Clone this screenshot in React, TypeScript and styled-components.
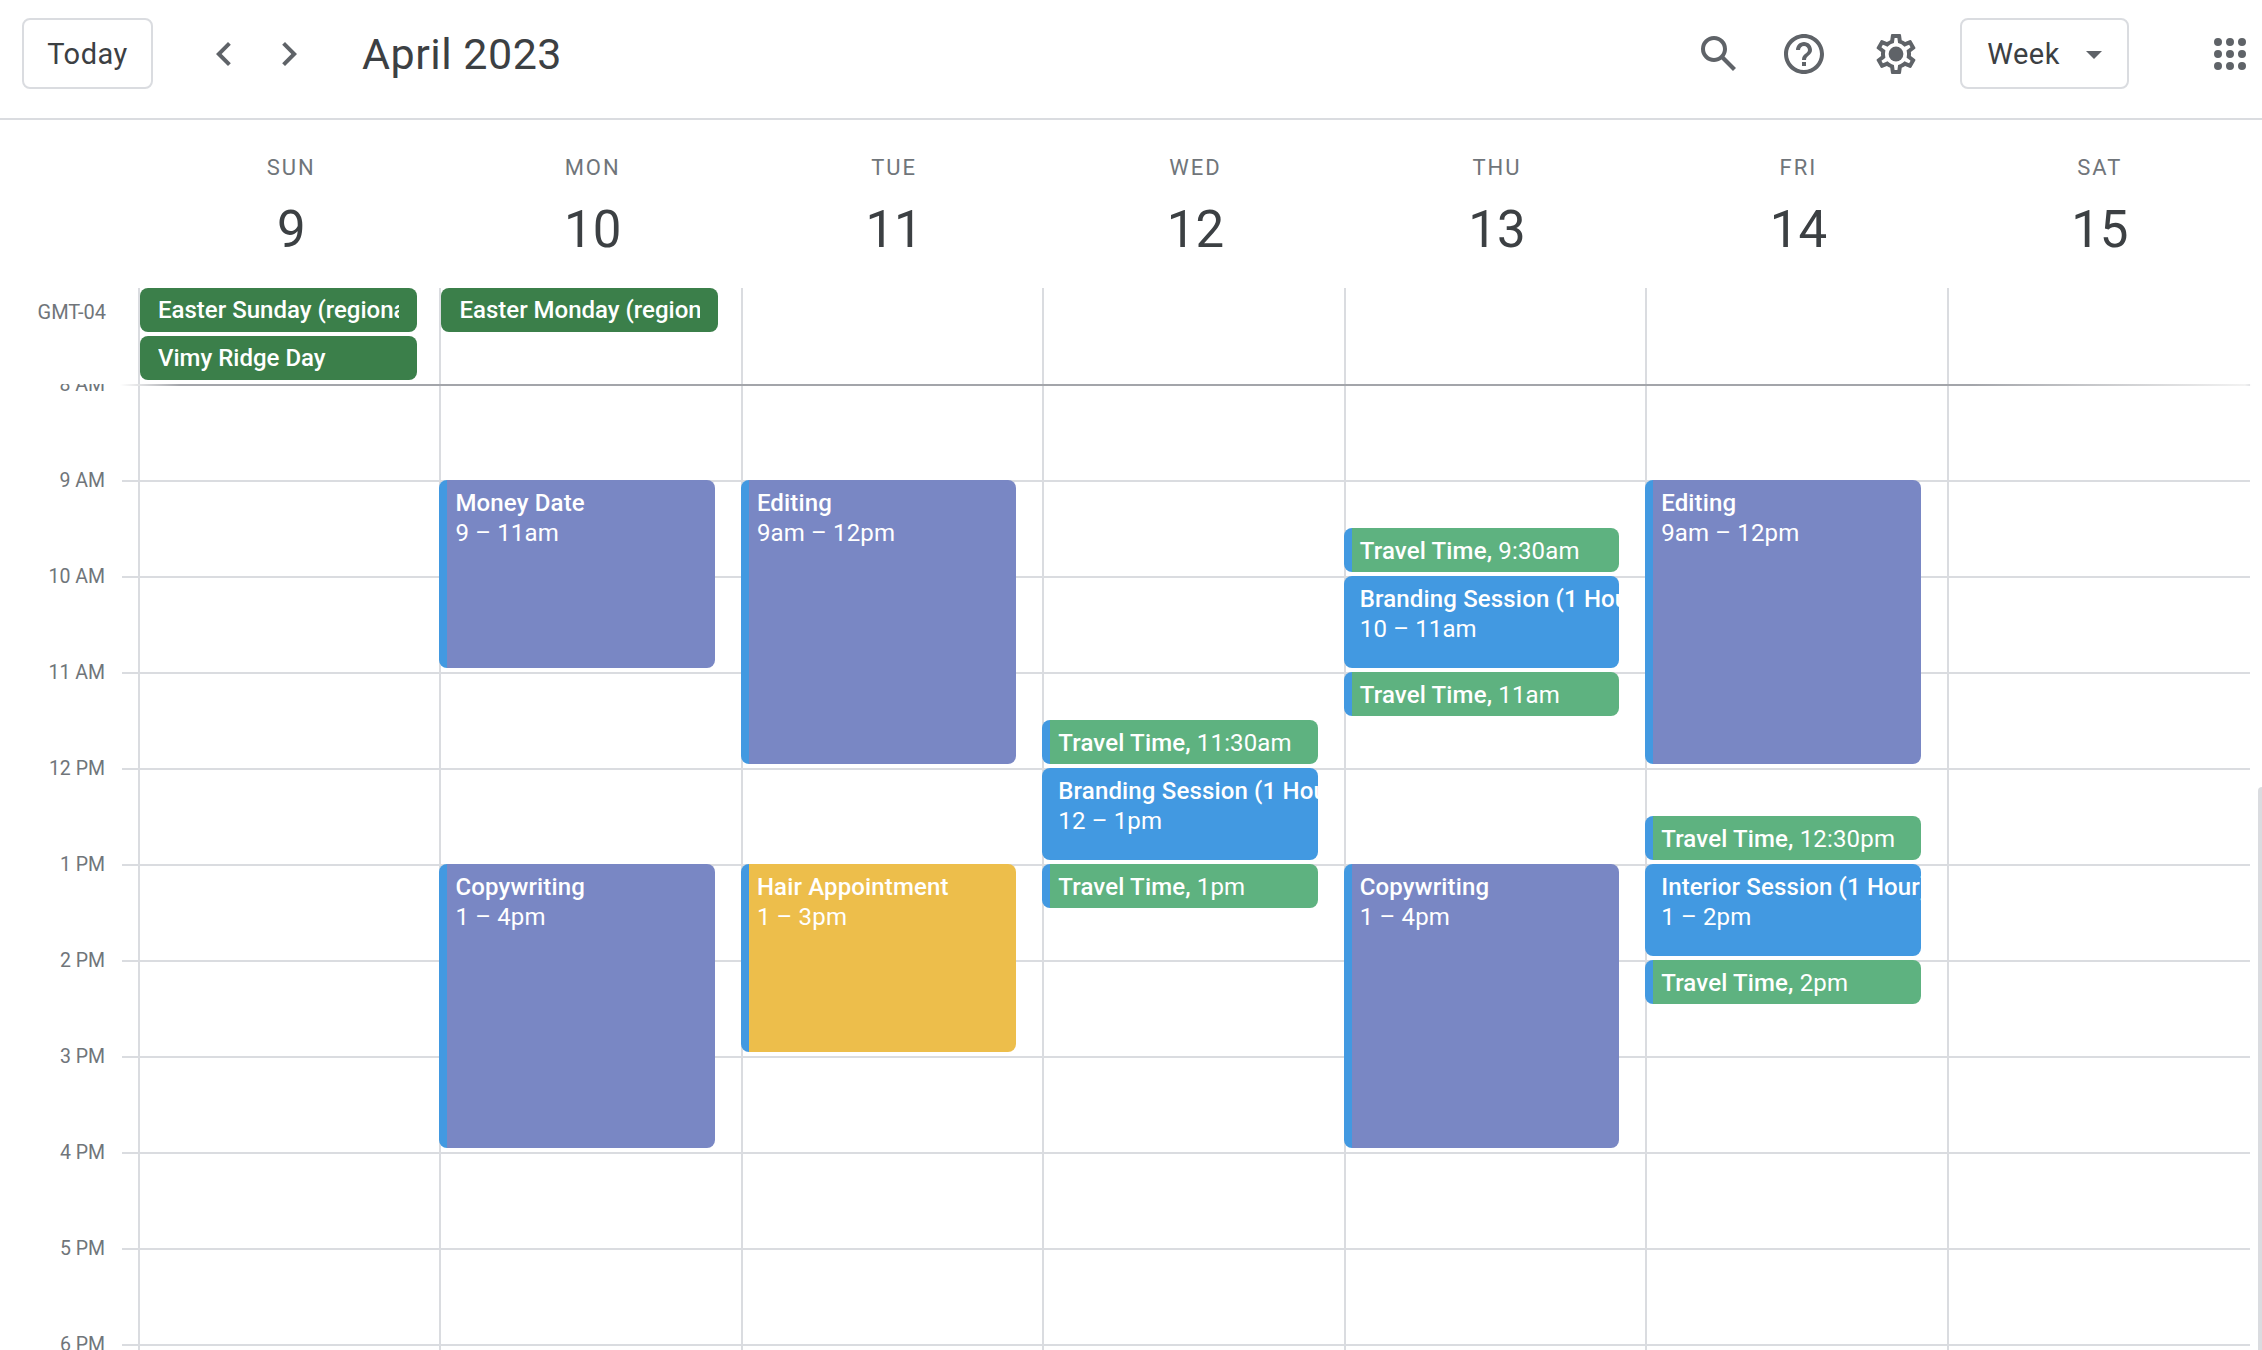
import React from "react";
import styled, { createGlobalStyle } from "styled-components";

const GlobalStyle = createGlobalStyle`
  html, body {
    margin: 0;
    padding: 0;
    background: #fff;
    font-family: Roboto, "Liberation Sans", sans-serif;
  }
`;

const Page = styled.div`
  width: 2262px;
  height: 1350px;
  position: relative;
  overflow: hidden;
  display: flex;
  flex-direction: column;
  background: #fff;
`;

const Toolbar = styled.header`
  height: 118px;
  flex-shrink: 0;
  display: flex;
  align-items: center;
  padding: 0 8px 0 22px;
  border-bottom: 2px solid #dadce0;
`;

const OutlineButton = styled.button<{ $width: number; $gap?: number }>`
  width: ${(p) => p.$width}px;
  height: 71px;
  box-sizing: border-box;
  display: flex;
  align-items: center;
  justify-content: center;
  gap: 26px;
  margin: -11px 0 0 ${(p) => p.$gap ?? 0}px;
  background: #fff;
  border: 2px solid #dadce0;
  border-radius: 8px;
  color: #3c4043;
  font-family: Roboto, sans-serif;
  font-weight: 400;
  font-size: 29px;
  letter-spacing: 0.5px;
`;

const IconSlot = styled.span<{ $gap: number }>`
  width: 48px;
  height: 48px;
  flex-shrink: 0;
  margin-left: ${(p) => p.$gap}px;
  margin-top: -11px;
  color: #5f6368;
  svg {
    display: block;
  }
`;

const MonthTitle = styled.h1`
  margin: -11px 0 0 49px;
  font-weight: 400;
  font-size: 43px;
  letter-spacing: 0.5px;
  color: #3c4043;
`;

const Spacer = styled.div`
  flex: 1;
`;

const Caret = styled.span`
  width: 0;
  height: 0;
  margin-top: 2px;
  border-left: 8px solid transparent;
  border-right: 8px solid transparent;
  border-top: 8px solid #5f6368;
`;

const DayHeaderRow = styled.div`
  height: 168px;
  flex-shrink: 0;
  display: grid;
  grid-template-columns: 138px repeat(7, 301.45px);
`;

const DayHeading = styled.div`
  display: flex;
  flex-direction: column;
  align-items: center;
  padding-left: 5px;
`;

const WeekdayName = styled.div`
  margin-top: 35px;
  font-size: 22px;
  line-height: 26px;
  font-weight: 400;
  letter-spacing: 2px;
  color: #70757a;
`;

const DayNumber = styled.div`
  margin-top: 19px;
  font-size: 51px;
  line-height: 60px;
  color: #3c4043;
`;

const AllDayRow = styled.div`
  height: 96px;
  flex-shrink: 0;
  display: grid;
  grid-template-columns: 138px repeat(7, 301.45px);
`;

const ZoneLabel = styled.div`
  padding: 13px 32px 0 0;
  text-align: right;
  font-size: 20px;
  line-height: 22px;
  color: #70757a;
`;

const AllDayCell = styled.div`
  border-left: 2px solid #dadce0;
  padding-right: 22.5px;
  display: flex;
  flex-direction: column;
  gap: 4px;
`;

const AllDayChip = styled.div`
  height: 44px;
  box-sizing: border-box;
  padding: 7px 18px 0 18px;
  border-radius: 8px;
  background: #3b7f4a;
  color: #fff;
  font-size: 24px;
  font-weight: 500;
  line-height: 30px;
`;

const ClippedLabel = styled.div`
  overflow: hidden;
  white-space: nowrap;
`;

const Separator = styled.div`
  position: absolute;
  left: 120px;
  right: 10px;
  top: 384px;
  height: 2px;
  z-index: 3;
  background: linear-gradient(to right, #fff 0, #a3a5aa 60px, #a3a5aa 1850px, #f2f2f2 2125px, transparent 2132px);
`;

const TimeGrid = styled.div`
  flex: 1;
  position: relative;
  overflow: hidden;
`;

const HourRow = styled.div`
  height: 96px;
  display: flex;
  padding-right: 12px;
`;

const HourLabel = styled.div`
  width: 122px;
  flex-shrink: 0;
  box-sizing: border-box;
  height: 22px;
  margin-top: -10px;
  padding-right: 17px;
  text-align: right;
  font-size: 19.5px;
  line-height: 22px;
  color: #70757a;
`;

const HourLine = styled.div`
  flex: 1;
  border-top: 2px solid #dadce0;
`;

const DayColumns = styled.div`
  position: absolute;
  top: 0;
  bottom: 0;
  left: 138px;
  display: grid;
  grid-template-columns: repeat(7, 301.45px);
`;

const DayColumn = styled.div`
  position: relative;
  border-left: 2px solid #dadce0;
`;

const toneColors = {
  indigo: "#7987c4",
  blue: "#4299e1",
  green: "#5eb280",
  yellow: "#edbe4b",
};

type Tone = keyof typeof toneColors;

const EventCard = styled.div<{ $tone: Tone; $start: number; $hours: number }>`
  position: absolute;
  left: -2px;
  width: 275.5px;
  top: ${(p) => (p.$start - 8) * 96}px;
  height: ${(p) => p.$hours * 96 - 4}px;
  box-sizing: border-box;
  padding: 8px 0 0 16px;
  overflow: hidden;
  white-space: nowrap;
  border-radius: 8px;
  background: linear-gradient(to right, #4299e1 8px, ${(p) => toneColors[p.$tone]} 8px);
  color: #fff;
  font-size: 24px;
  letter-spacing: 0.15px;
  line-height: 30px;
`;

const EventTitle = styled.div`
  font-weight: 500;
`;

const Strong = styled.span`
  font-weight: 500;
`;

const ScrollThumb = styled.div`
  position: absolute;
  right: 0;
  top: 787px;
  bottom: 0;
  width: 4px;
  border-radius: 4px 0 0 0;
  background: #dadce0;
`;

const Icon = ({ d, extra }: { d: string; extra?: React.ReactNode }) => (
  <svg width="48" height="48" viewBox="0 0 24 24" fill="currentColor">
    <path d={d} />
    {extra}
  </svg>
);

const gearPath =
  "M19.43 12.98c.04-.32.07-.64.07-.98 0-.34-.03-.66-.07-.98l2.11-1.65c.19-.15.24-.42.12-.64l-2-3.46c-.09-.16-.26-.25-.44-.25-.06 0-.12.01-.17.03l-2.49 1c-.52-.4-1.08-.73-1.69-.98l-.38-2.65C14.46 2.18 14.25 2 14 2h-4c-.25 0-.46.18-.49.42l-.38 2.65c-.61.25-1.17.59-1.69.98l-2.49-1c-.06-.02-.12-.03-.18-.03-.17 0-.34.09-.43.25l-2 3.46c-.13.22-.07.49.12.64l2.11 1.65c-.04.32-.07.65-.07.98 0 .33.03.66.07.98l-2.11 1.65c-.19.15-.24.42-.12.64l2 3.46c.09.16.26.25.44.25.06 0 .12-.01.17-.03l2.49-1c.52.4 1.08.73 1.69.98l.38 2.65c.03.24.24.42.49.42h4c.25 0 .46-.18.49-.42l.38-2.65c.61-.25 1.17-.59 1.69-.98l2.49 1c.06.02.12.03.18.03.17 0 .34-.09.43-.25l2-3.46c.12-.22.07-.49-.12-.64l-2.11-1.65zm-1.98-1.71c.04.31.05.52.05.73 0 .21-.02.43-.05.73l-.14 1.13.89.7 1.08.84-.7 1.21-1.27-.51-1.04-.42-.9.68c-.43.32-.84.56-1.25.73l-1.06.43-.16 1.13-.2 1.35h-1.4l-.19-1.35-.16-1.13-1.06-.43c-.43-.18-.83-.41-1.23-.71l-.91-.7-1.06.43-1.27.51-.7-1.21 1.08-.84.89-.7-.14-1.13c-.03-.31-.05-.54-.05-.74s.02-.43.05-.73l.14-1.13-.89-.7-1.08-.84.7-1.21 1.27.51 1.04.42.9-.68c.43-.32.84-.56 1.25-.73l1.06-.43.16-1.13.2-1.35h1.39l.19 1.35.16 1.13 1.06.43c.43.18.83.41 1.23.71l.91.7 1.06-.43 1.27-.51.7 1.21-1.07.85-.89.7.14 1.13z";

const appsPath =
  "M6 8a2 2 0 1 0 0-4 2 2 0 0 0 0 4zm6 0a2 2 0 1 0 0-4 2 2 0 0 0 0 4zm6 0a2 2 0 1 0 0-4 2 2 0 0 0 0 4zM6 14a2 2 0 1 0 0-4 2 2 0 0 0 0 4zm6 0a2 2 0 1 0 0-4 2 2 0 0 0 0 4zm6 0a2 2 0 1 0 0-4 2 2 0 0 0 0 4zM6 20a2 2 0 1 0 0-4 2 2 0 0 0 0 4zm6 0a2 2 0 1 0 0-4 2 2 0 0 0 0 4zm6 0a2 2 0 1 0 0-4 2 2 0 0 0 0 4z";

const days = [
  { name: "SUN", num: 9, allDay: ["Easter Sunday (regional holiday)", "Vimy Ridge Day"] },
  { name: "MON", num: 10, allDay: ["Easter Monday (regional holiday)"] },
  { name: "TUE", num: 11, allDay: [] },
  { name: "WED", num: 12, allDay: [] },
  { name: "THU", num: 13, allDay: [] },
  { name: "FRI", num: 14, allDay: [] },
  { name: "SAT", num: 15, allDay: [] },
];

const hours = ["8 AM", "9 AM", "10 AM", "11 AM", "12 PM", "1 PM", "2 PM", "3 PM", "4 PM", "5 PM", "6 PM"];

type CalEvent = { day: number; start: number; hours: number; tone: Tone; title: string; time: string };

const events: CalEvent[] = [
  { day: 1, start: 9, hours: 2, tone: "indigo", title: "Money Date", time: "9 – 11am" },
  { day: 1, start: 13, hours: 3, tone: "indigo", title: "Copywriting", time: "1 – 4pm" },
  { day: 2, start: 9, hours: 3, tone: "indigo", title: "Editing", time: "9am – 12pm" },
  { day: 2, start: 13, hours: 2, tone: "yellow", title: "Hair Appointment", time: "1 – 3pm" },
  { day: 3, start: 11.5, hours: 0.5, tone: "green", title: "Travel Time", time: "11:30am" },
  { day: 3, start: 12, hours: 1, tone: "blue", title: "Branding Session (1 Hour)", time: "12 – 1pm" },
  { day: 3, start: 13, hours: 0.5, tone: "green", title: "Travel Time", time: "1pm" },
  { day: 4, start: 9.5, hours: 0.5, tone: "green", title: "Travel Time", time: "9:30am" },
  { day: 4, start: 10, hours: 1, tone: "blue", title: "Branding Session (1 Hour)", time: "10 – 11am" },
  { day: 4, start: 11, hours: 0.5, tone: "green", title: "Travel Time", time: "11am" },
  { day: 4, start: 13, hours: 3, tone: "indigo", title: "Copywriting", time: "1 – 4pm" },
  { day: 5, start: 9, hours: 3, tone: "indigo", title: "Editing", time: "9am – 12pm" },
  { day: 5, start: 12.5, hours: 0.5, tone: "green", title: "Travel Time", time: "12:30pm" },
  { day: 5, start: 13, hours: 1, tone: "blue", title: "Interior Session (1 Hour)", time: "1 – 2pm" },
  { day: 5, start: 14, hours: 0.5, tone: "green", title: "Travel Time", time: "2pm" },
];

function App() {
  return (
    <Page>
      <GlobalStyle />
      <Toolbar>
        <OutlineButton $width={131}>Today</OutlineButton>
        <IconSlot $gap={47}>
          <Icon d="M15.41 7.41L14 6l-6 6 6 6 1.41-1.41L10.83 12z" />
        </IconSlot>
        <IconSlot $gap={17}>
          <Icon d="M10 6L8.59 7.41 13.17 12l-4.58 4.59L10 18l6-6z" />
        </IconSlot>
        <MonthTitle>April 2023</MonthTitle>
        <Spacer />
        <IconSlot $gap={0}>
          <Icon d="M20.49 19l-5.73-5.73C15.53 12.2 16 10.91 16 9.5A6.5 6.5 0 1 0 9.5 16c1.41 0 2.7-.47 3.77-1.24L19 20.49 20.49 19zM5 9.5C5 7.01 7.01 5 9.5 5S14 7.01 14 9.5 11.99 14 9.5 14 5 11.99 5 9.5z" />
        </IconSlot>
        <IconSlot $gap={37}>
          <Icon d="M11 18h2v-2h-2v2zm1-16C6.48 2 2 6.48 2 12s4.48 10 10 10 10-4.48 10-10S17.52 2 12 2zm0 18c-4.41 0-8-3.59-8-8s3.59-8 8-8 8 3.59 8 8-3.59 8-8 8zm0-14c-2.21 0-4 1.79-4 4h2c0-1.1.9-2 2-2s2 .9 2 2c0 2-3 1.75-3 5h2c0-2.25 3-2.5 3-5 0-2.21-1.79-4-4-4z" />
        </IconSlot>
        <IconSlot $gap={44}>
          <Icon d={gearPath} extra={<circle cx="12" cy="12" r="3.7" />} />
        </IconSlot>
        <OutlineButton $width={169} $gap={40}>
          Week
          <Caret />
        </OutlineButton>
        <IconSlot $gap={77}>
          <Icon d={appsPath} />
        </IconSlot>
      </Toolbar>

      <DayHeaderRow>
        <div />
        {days.map((d) => (
          <DayHeading key={d.name}>
            <WeekdayName>{d.name}</WeekdayName>
            <DayNumber>{d.num}</DayNumber>
          </DayHeading>
        ))}
      </DayHeaderRow>

      <AllDayRow>
        <ZoneLabel>GMT-04</ZoneLabel>
        {days.map((d) => (
          <AllDayCell key={d.name}>
            {d.allDay.map((label) => (
              <AllDayChip key={label}>
                <ClippedLabel>{label}</ClippedLabel>
              </AllDayChip>
            ))}
          </AllDayCell>
        ))}
      </AllDayRow>

      <Separator />

      <TimeGrid>
        {hours.map((h) => (
          <HourRow key={h}>
            <HourLabel>{h}</HourLabel>
            <HourLine />
          </HourRow>
        ))}
        <DayColumns>
          {days.map((d, i) => (
            <DayColumn key={d.name}>
              {events
                .filter((e) => e.day === i)
                .map((e) =>
                  e.hours === 0.5 ? (
                    <EventCard key={e.time} $tone={e.tone} $start={e.start} $hours={e.hours}>
                      <Strong>{e.title},</Strong> {e.time}
                    </EventCard>
                  ) : (
                    <EventCard key={e.time} $tone={e.tone} $start={e.start} $hours={e.hours}>
                      <EventTitle>{e.title}</EventTitle>
                      <div>{e.time}</div>
                    </EventCard>
                  )
                )}
            </DayColumn>
          ))}
        </DayColumns>
      </TimeGrid>

      <ScrollThumb />
    </Page>
  );
}

export default App;
